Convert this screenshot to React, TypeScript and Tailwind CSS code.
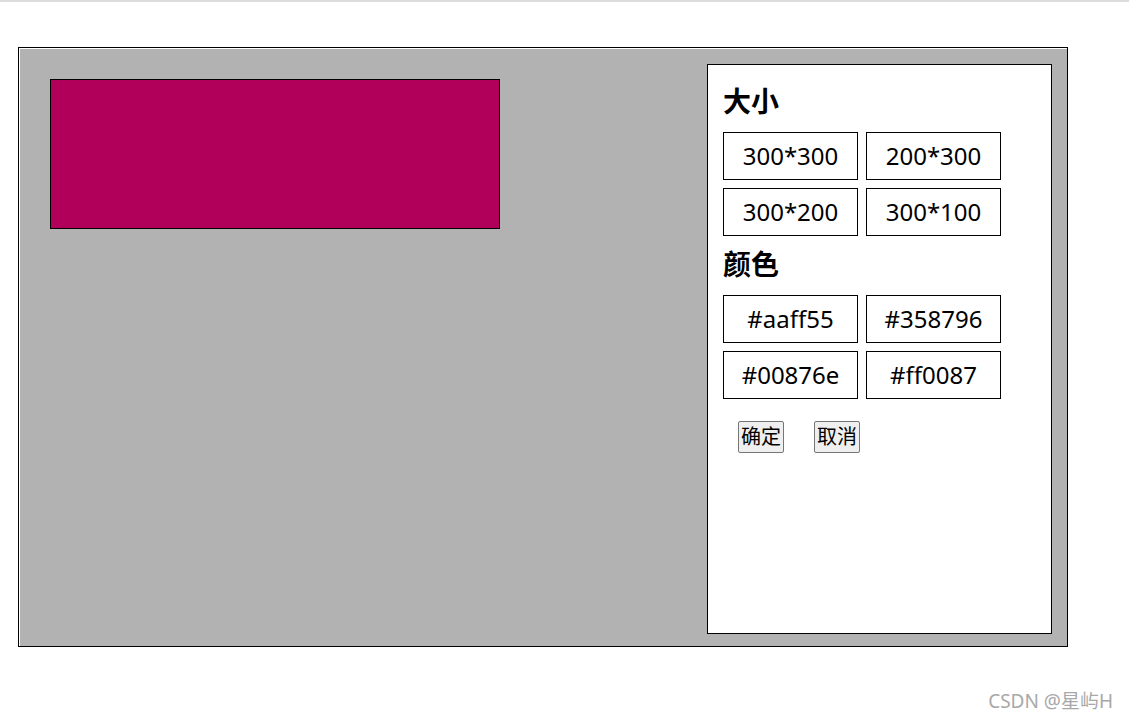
const sizes = ['300*300', '200*300', '300*200', '300*100']
const colors = ['#aaff55', '#358796', '#00876e', '#ff0087']

const font = { fontFamily: '"Noto Sans", "Noto Sans CJK SC", sans-serif' }

const Option = ({ label }: { label: string }) => (
  <button className="h-[48px] w-[135px] border border-black bg-white text-[24px] leading-[46px] text-black">
    {label}
  </button>
)

const App = () => {
  return (
    <div className="min-h-screen bg-white" style={font}>
      <div className="h-[2px] bg-[#dcdcdc]" />

      {/* 画布 */}
      <div className="ml-[18px] mt-[45px] flex h-[600px] w-[1050px] items-start justify-between border border-black bg-[#b2b2b2] pl-[31px] pr-[15px] pt-[16px] shadow-[inset_1px_1px_0_#fff]">
        <div className="mt-[15px] h-[150px] w-[450px] border border-black bg-[#b1005a]" />

        {/* 设置面板 */}
        <div className="h-[570px] w-[345px] border border-black bg-white px-[15px] pt-[19px]">
          <h2 className="text-[28px] font-bold leading-[34px] text-black">大小</h2>
          <div className="mt-[14px] grid w-[278px] grid-cols-2 gap-[8px]">
            {sizes.map((s) => (
              <Option key={s} label={s} />
            ))}
          </div>

          <h2 className="mt-[11px] text-[28px] font-bold leading-[34px] text-black">颜色</h2>
          <div className="mt-[14px] grid w-[278px] grid-cols-2 gap-[8px]">
            {colors.map((c) => (
              <Option key={c} label={c} />
            ))}
          </div>

          <div className="mt-[22px] flex gap-[30px] pl-[15px]">
            <button className="h-[32px] rounded-[2px] border border-[#767676] bg-[#efefef] px-[2px] text-[20px] leading-[28px] text-black">
              确定
            </button>
            <button className="h-[32px] rounded-[2px] border border-[#767676] bg-[#efefef] px-[2px] text-[20px] leading-[28px] text-black">
              取消
            </button>
          </div>
        </div>
      </div>

      <div className="mt-[42px] flex justify-end pr-[16px] text-[19px] leading-[24px] text-[#a8a8a8]">
        CSDN @星屿H
      </div>
    </div>
  )
}

export default App
